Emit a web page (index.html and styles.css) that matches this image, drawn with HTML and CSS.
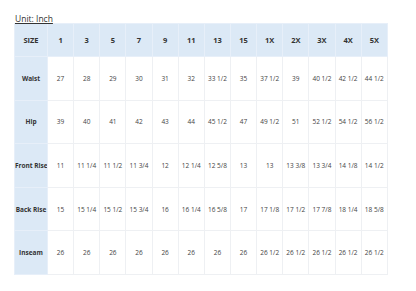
FILE: index.html
```html
<!DOCTYPE html>
<html>
<head>
<meta charset="utf-8">
<link rel="stylesheet" href="styles.css">
</head>
<body>
<div class="wrap">
  <div class="unit">Unit: Inch</div>
  <table class="size-table">
    <colgroup>
      <col class="c-label">
      <col span="13" class="c-data">
    </colgroup>
    <thead>
      <tr><th>SIZE</th><th>1</th><th>3</th><th>5</th><th>7</th><th>9</th><th>11</th><th>13</th><th>15</th><th>1X</th><th>2X</th><th>3X</th><th>4X</th><th>5X</th></tr>
    </thead>
    <tbody>
      <tr><th>Waist</th><td>27</td><td>28</td><td>29</td><td>30</td><td>31</td><td>32</td><td>33 1/2</td><td>35</td><td>37 1/2</td><td>39</td><td>40 1/2</td><td>42 1/2</td><td>44 1/2</td></tr>
      <tr><th>Hip</th><td>39</td><td>40</td><td>41</td><td>42</td><td>43</td><td>44</td><td>45 1/2</td><td>47</td><td>49 1/2</td><td>51</td><td>52 1/2</td><td>54 1/2</td><td>56 1/2</td></tr>
      <tr><th>Front Rise</th><td>11</td><td>11 1/4</td><td>11 1/2</td><td>11 3/4</td><td>12</td><td>12 1/4</td><td>12 5/8</td><td>13</td><td>13</td><td>13 3/8</td><td>13 3/4</td><td>14 1/8</td><td>14 1/2</td></tr>
      <tr><th>Back Rise</th><td>15</td><td>15 1/4</td><td>15 1/2</td><td>15 3/4</td><td>16</td><td>16 1/4</td><td>16 5/8</td><td>17</td><td>17 1/8</td><td>17 1/2</td><td>17 7/8</td><td>18 1/4</td><td>18 5/8</td></tr>
      <tr><th>Inseam</th><td>26</td><td>26</td><td>26</td><td>26</td><td>26</td><td>26</td><td>26</td><td>26</td><td>26 1/2</td><td>26 1/2</td><td>26 1/2</td><td>26 1/2</td><td>26 1/2</td></tr>
    </tbody>
  </table>
</div>
</body>
</html>
```
FILE: styles.css
```css
html, body {
  margin: 0;
  padding: 0;
  background: #ffffff;
}
body {
  font-family: "Open Sans", "Noto Sans", sans-serif;
  color: #333;
}
.wrap {
  padding: 15px 0 0 14px;
}
.unit {
  font-size: 8.5px;
  line-height: 8px;
  height: 8px;
  text-decoration: underline;
  color: #333;
  padding-left: 1px;
}
.size-table {
  border-collapse: collapse;
  table-layout: fixed;
  width: 374px;
}
.c-label { width: 33px; }
.size-table th,
.size-table td {
  padding: 0;
  text-align: center;
  vertical-align: middle;
  white-space: nowrap;
  overflow: hidden;
}
.size-table thead th {
  height: 32px;
  background: #dce9f6;
  border: 1px solid #e7eff9;
  font-size: 7.5px;
  font-weight: 700;
  color: #333;
}
.size-table tbody tr {
  height: 43.6px;
}
.size-table tbody th {
  background: #dce9f6;
  border: 1px solid #e7eff9;
  font-size: 6.5px;
  font-weight: 700;
  color: #333;
}
.size-table tbody td {
  border: 1px solid #eef0f3;
  font-size: 6.5px;
  color: #444;
}
```
